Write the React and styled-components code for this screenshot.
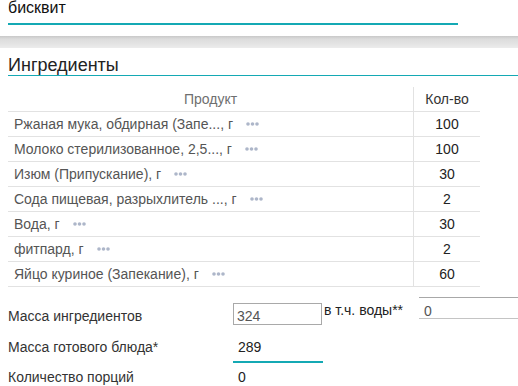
import React from "react";
import styled, { createGlobalStyle } from "styled-components";

const GlobalStyle = createGlobalStyle`
  body {
    margin: 0;
    background: #ffffff;
    font-family: "Liberation Sans", Arial, sans-serif;
    overflow: hidden;
  }
`;

const TEAL = "#14a9b4";

const Page = styled.div`
  width: 518px;
  height: 386px;
  overflow: hidden;
`;

const SearchField = styled.div`
  margin-left: 8px;
  width: 450px;
  height: 23px;
  border-bottom: 2px solid ${TEAL};
  font-size: 16px;
  line-height: 16px;
  color: #111;
`;

const Divider = styled.div`
  margin-top: 11px;
  height: 12px;
  background: linear-gradient(to bottom, #c8c8c8 0, #dcdcdc 3px, #e4e4e4 8px, #ececec 100%);
`;

const Section = styled.div`
  padding-left: 8px;
`;

const Title = styled.div`
  padding-top: 7px;
  font-size: 18px;
  line-height: 20px;
  color: #222;
  border-bottom: 1px solid ${TEAL};
`;

const Table = styled.table`
  margin-top: 11px;
  width: 472px;
  border-collapse: collapse;
  font-size: 14px;
  color: #555;
`;

const HeadCell = styled.th`
  height: 24px;
  padding: 0;
  font-weight: normal;
  text-align: center;
  color: ${(p) => (p.$dark ? "#333" : "#6f6f6f")};
  border-bottom: 1px solid #e2e2e2;
  border-right: ${(p) => (p.$sep ? "1px solid #e2e2e2" : "none")};
`;

const Cell = styled.td`
  height: 24px;
  padding: 0 0 0 ${(p) => (p.$center ? 0 : 6)}px;
  text-align: ${(p) => (p.$center ? "center" : "left")};
  color: ${(p) => (p.$center ? "#222" : "#555")};
  border-bottom: 1px solid #e2e2e2;
  border-right: ${(p) => (p.$sep ? "1px solid #e2e2e2" : "none")};
  white-space: nowrap;
`;

const More = styled.svg`
  margin-left: 13px;
  vertical-align: 3px;
`;

const Form = styled.div`
  margin-top: 10px;
  padding-left: 8px;
  font-size: 14px;
  color: #333;
`;

const Row = styled.div`
  display: flex;
  align-items: flex-start;
`;

const Label = styled.div`
  width: 225px;
  flex: none;
  margin-top: ${(p) => p.$top}px;
  line-height: 16px;
`;

const BoxInput = styled.div`
  margin-top: 6px;
  width: 89px;
  height: 22px;
  box-sizing: border-box;
  border: 1px solid #a9a9a9;
  padding: 4px 0 0 3px;
  line-height: 16px;
  color: #555;
`;

const Inline = styled.div`
  margin: 5px 0 0 2px;
  width: 95px;
  flex: none;
  line-height: 16px;
  color: #222;
  white-space: nowrap;
`;

const LineInput = styled.div`
  flex: 1;
  height: 22px;
  box-sizing: border-box;
  border-top: 1px solid #a8a8a8;
  border-bottom: 1px solid #c4c4c4;
  padding: 5px 0 0 5px;
  line-height: 16px;
  color: #555;
`;

const UnderInput = styled.div`
  width: 90px;
  padding: 14px 0 6px 5px;
  box-sizing: border-box;
  line-height: 16px;
  color: #222;
  border-bottom: ${(p) => (p.$active ? `2px solid ${TEAL}` : "none")};
  margin-top: ${(p) => p.$top || 0}px;
`;

const ingredients = [
  ["Ржаная мука, обдирная (Запе..., г", 100],
  ["Молоко стерилизованное, 2,5..., г", 100],
  ["Изюм (Припускание), г", 30],
  ["Сода пищевая, разрыхлитель ..., г", 2],
  ["Вода, г", 30],
  ["фитпард, г", 2],
  ["Яйцо куриное (Запекание), г", 60],
];

const Dots = () => (
  <More width="13" height="4" viewBox="0 0 13 4">
    <circle cx="2" cy="2" r="1.8" fill="#adb6c9" />
    <circle cx="6.5" cy="2" r="1.8" fill="#adb6c9" />
    <circle cx="11" cy="2" r="1.8" fill="#adb6c9" />
  </More>
);

export default function App() {
  return (
    <Page>
      <GlobalStyle />
      <SearchField>бисквит</SearchField>
      <Divider />
      <Section>
        <Title>Ингредиенты</Title>
        <Table>
          <thead>
            <tr>
              <HeadCell $sep>Продукт</HeadCell>
              <HeadCell $dark style={{ width: 66 }}>
                Кол-во
              </HeadCell>
            </tr>
          </thead>
          <tbody>
            {ingredients.map(([name, qty]) => (
              <tr key={name}>
                <Cell $sep>
                  {name}
                  <Dots />
                </Cell>
                <Cell $center>{qty}</Cell>
              </tr>
            ))}
          </tbody>
        </Table>
      </Section>
      <Form>
        <Row>
          <Label $top={11}>Масса ингредиентов</Label>
          <BoxInput>324</BoxInput>
          <Inline>в т.ч. воды**</Inline>
          <LineInput>0</LineInput>
        </Row>
        <Row>
          <Label $top={14}>Масса готового блюда*</Label>
          <UnderInput $active>289</UnderInput>
        </Row>
        <Row>
          <Label $top={6}>Количество порций</Label>
          <UnderInput $top={-8}>0</UnderInput>
        </Row>
      </Form>
    </Page>
  );
}
